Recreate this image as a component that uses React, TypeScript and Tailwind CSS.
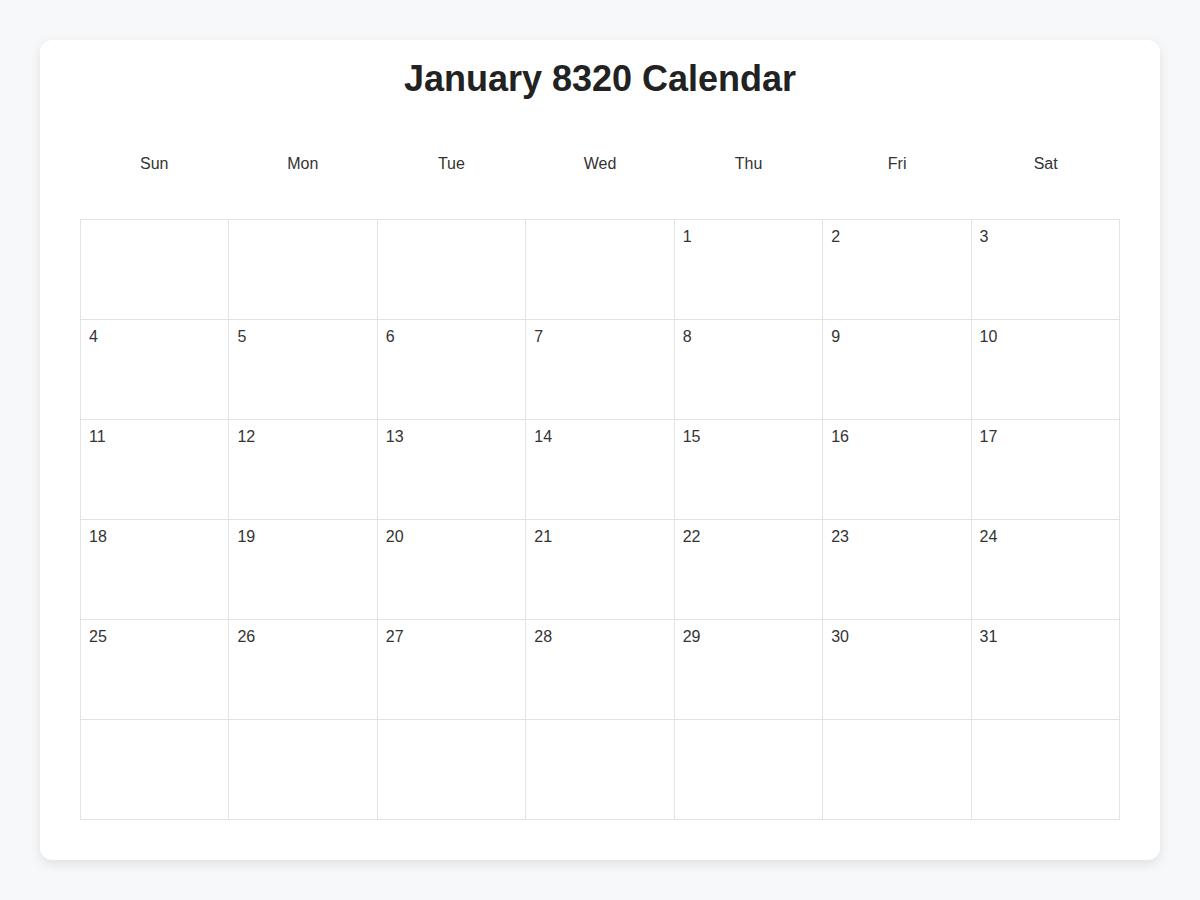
import React from "react";

const days = ["Sun", "Mon", "Tue", "Wed", "Thu", "Fri", "Sat"];

export default function App() {
  const cells: (number | null)[] = [];
  for (let i = 0; i < 4; i++) cells.push(null);
  for (let d = 1; d <= 31; d++) cells.push(d);
  while (cells.length < 42) cells.push(null);

  return (
    <div
      className="w-[1200px] h-[900px] bg-[#f7f8fa] pt-[40px] px-[40px]"
      style={{ fontFamily: '"Liberation Sans", Arial, sans-serif' }}
    >
      <div className="bg-white rounded-xl shadow-[0_4px_12px_rgba(0,0,0,0.1)] h-[820px] px-[40px] pt-[18px] flex flex-col">
        <h1 className="text-[36px] leading-[normal] font-bold text-[#222] text-center m-0 h-[41px]">
          January 8320 Calendar
        </h1>
        <div className="grid grid-cols-7 mt-[56px] text-[16px] leading-[18px] text-[#333]">
          {days.map((d) => (
            <div key={d} className="text-center">
              {d}
            </div>
          ))}
        </div>
        <div className="grid grid-cols-7 mt-[46px] border-l border-t border-[#e3e3e3]">
          {cells.map((c, i) => (
            <div
              key={i}
              className="h-[100px] border-r border-b border-[#e3e3e3] pl-2 pt-[8px] text-[16px] leading-[18px] text-[#333]"
            >
              {c ?? ""}
            </div>
          ))}
        </div>
      </div>
    </div>
  );
}
